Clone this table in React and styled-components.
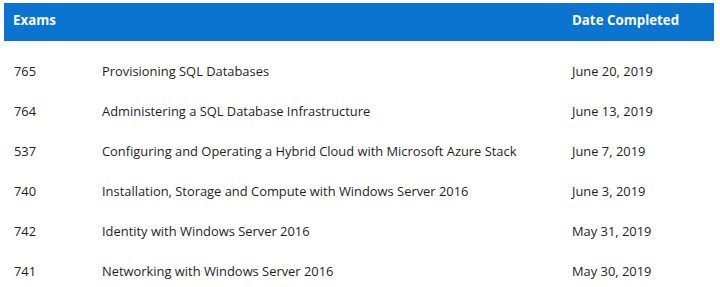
import React from 'react';
import styled, { createGlobalStyle } from 'styled-components';

const GlobalStyle = createGlobalStyle`
  body {
    margin: 0;
    background: #ffffff;
    font-family: "Open Sans", "Noto Sans", sans-serif;
  }
`;

const Wrapper = styled.div`
  padding: 3px 6px 0 4px;
`;

const Table = styled.table`
  width: 100%;
  table-layout: fixed;
  border-collapse: collapse;
  font-size: 12.9px;
  color: #1e1e1e;
`;

const Col = styled.col`
  width: ${(p) => p.$width || 'auto'};
`;

const HeadRow = styled.tr`
  background: #0a74d0;
  height: 38px;
`;

const HeadCell = styled.th`
  text-align: left;
  color: #ffffff;
  font-weight: 700;
  font-size: 13.3px;
  padding: 0 0 4px ${(p) => p.$pad || 0}px;
`;

const Spacer = styled.tr`
  height: 10px;
`;

const Row = styled.tr`
  height: 40px;
`;

const Cell = styled.td`
  padding: 0 0 0 ${(p) => p.$pad || 0}px;
  vertical-align: middle;
  white-space: nowrap;
`;

const exams = [
  ['765', 'Provisioning SQL Databases', 'June 20, 2019'],
  ['764', 'Administering a SQL Database Infrastructure', 'June 13, 2019'],
  ['537', 'Configuring and Operating a Hybrid Cloud with Microsoft Azure Stack', 'June 7, 2019'],
  ['740', 'Installation, Storage and Compute with Windows Server 2016', 'June 3, 2019'],
  ['742', 'Identity with Windows Server 2016', 'May 31, 2019'],
  ['741', 'Networking with Windows Server 2016', 'May 30, 2019'],
];

const App = () => {
  return (
    <Wrapper>
      <GlobalStyle />
      <Table>
        <colgroup>
          <Col $width="98px" />
          <Col $width="470px" />
          <Col />
        </colgroup>
        <thead>
          <HeadRow>
            <HeadCell $pad={9}>Exams</HeadCell>
            <HeadCell></HeadCell>
            <HeadCell>Date Completed</HeadCell>
          </HeadRow>
        </thead>
        <tbody>
          <Spacer />
          {exams.map(([num, title, date]) => (
            <Row key={num}>
              <Cell $pad={10}>{num}</Cell>
              <Cell>{title}</Cell>
              <Cell>{date}</Cell>
            </Row>
          ))}
        </tbody>
      </Table>
    </Wrapper>
  );
};

export default App;
